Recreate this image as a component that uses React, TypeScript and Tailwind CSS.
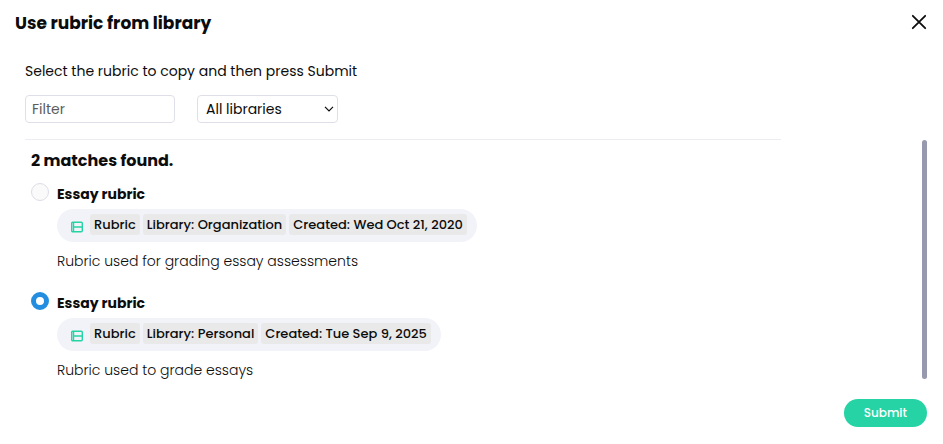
import React, { useState } from 'react';

interface Rubric {
    id: string;
    name: string;
    library: string;
    created: string;
    description: string;
}

const rubrics: Rubric[] = [
    {
        id: 'organization',
        name: 'Essay rubric',
        library: 'Organization',
        created: 'Wed Oct 21, 2020',
        description: 'Rubric used for grading essay assessments',
    },
    {
        id: 'personal',
        name: 'Essay rubric',
        library: 'Personal',
        created: 'Tue Sep 9, 2025',
        description: 'Rubric used to grade essays',
    },
];

const CloseIcon: React.FC = () => (
    <svg viewBox="0 0 16 16" className="w-4 h-4" fill="none" stroke="currentColor" strokeWidth="1.8" strokeLinecap="round">
        <path d="M1.8 1.8 14.2 14.2M14.2 1.8 1.8 14.2" />
    </svg>
);

const RubricIcon: React.FC = () => (
    <svg viewBox="0 0 12 12" className="w-3 h-3 shrink-0" fill="none" stroke="#25d3a4" strokeWidth="1.4">
        <rect x="0.7" y="1.2" width="10.6" height="9.6" rx="1" />
        <path d="M2.5 1.2v9.6M2.5 6h8.8" />
    </svg>
);

const Tag: React.FC<{ children: React.ReactNode }> = ({ children }) => (
    <span className="h-[21px] px-1 rounded-[3px] bg-[#e9e9ea] text-[13px] leading-[21px] font-medium whitespace-nowrap">{children}</span>
);

interface RubricOptionProps {
    rubric: Rubric;
    checked: boolean;
    onSelect: (id: string) => void;
}

const RubricOption: React.FC<RubricOptionProps> = ({ rubric, checked, onSelect }) => (
    <li className="flex gap-2 h-[109px]">
        <input
            type="radio"
            id={rubric.id}
            name="rubric"
            checked={checked}
            onChange={() => onSelect(rubric.id)}
            className="appearance-none shrink-0 w-[18px] h-[18px] rounded-full border border-[#dddde8] bg-[#fafafa] checked:border-[5px] checked:border-[#238ee0] checked:bg-white"
        />
        <div className="pt-px flex flex-col items-start">
            <label htmlFor={rubric.id} className="text-sm leading-5 font-bold">{rubric.name}</label>
            <div className="mt-[5px] h-[33px] pl-3.5 pr-2.5 pt-[5px] flex items-start gap-[3px] rounded-full bg-[#f2f2f9]">
                <span className="pt-[7px] pr-1"><RubricIcon /></span>
                <Tag>Rubric</Tag>
                <Tag>Library: {rubric.library}</Tag>
                <Tag>Created: {rubric.created}</Tag>
            </div>
            <p className="mt-[9px] text-sm leading-5 font-light text-[#0c0c0c]">{rubric.description}</p>
        </div>
    </li>
);

const App: React.FC = () => {
    const [filter, setFilter] = useState('');
    const [library, setLibrary] = useState('all');
    const [selectedId, setSelectedId] = useState('personal');

    return (
        <div className="bg-white text-[#0c0c0c] font-['Poppins','Inter',sans-serif]">
            <header className="flex items-start justify-between pt-[13px] pl-[15px] pr-4">
                <h1 className="text-[17px] leading-5 font-bold">Use rubric from library</h1>
                <button type="button" aria-label="Close" className="pt-px"><CloseIcon /></button>
            </header>

            <div className="pt-7 pl-[25px]">
                <p className="text-sm leading-5">Select the rubric to copy and then press Submit</p>
                <div className="mt-3.5 flex gap-[22px]">
                    <input
                        type="text"
                        aria-label="Filter"
                        placeholder="Filter"
                        value={filter}
                        onChange={(e) => setFilter(e.target.value)}
                        className="w-[150px] h-7 px-1.5 rounded-sm border border-[#dfdfe9] text-sm placeholder:text-[#5c5c5c]"
                    />
                    <div className="relative">
                        <select
                            aria-label="Library"
                            value={library}
                            onChange={(e) => setLibrary(e.target.value)}
                            className="appearance-none w-[141px] h-7 pl-2 rounded-sm border border-[#dfdfe9] bg-white text-sm"
                        >
                            <option value="all">All libraries</option>
                            <option value="organization">Organization</option>
                            <option value="personal">Personal</option>
                        </select>
                        <svg viewBox="0 0 10 6" className="absolute right-1 top-[11px] w-2.5 h-1.5 pointer-events-none" fill="none" stroke="currentColor" strokeWidth="1.2">
                            <path d="M1 0.8 5 4.8 9 0.8" />
                        </svg>
                    </div>
                </div>
            </div>

            <main className="mt-4 pl-[25px] pr-4 flex justify-between">
                <div className="grow max-w-[756px] h-[240px] overflow-hidden border-t border-[#ececf3]">
                    <div className="pl-1.5 pt-[11px]">
                        <h2 className="text-base leading-5 font-bold">{rubrics.length} matches found.</h2>
                        <ul className="pt-3">
                            {rubrics.map(r => (
                                <RubricOption key={r.id} rubric={r} checked={r.id === selectedId} onSelect={setSelectedId} />
                            ))}
                        </ul>
                    </div>
                </div>
                <div className="w-[5px] mt-px rounded-full bg-[#9799af]" />
            </main>

            <footer className="flex justify-end pt-5 pr-4 pb-4">
                <button type="submit" className="h-7 px-5 rounded-full bg-[#25d3a4] text-white text-xs font-medium">Submit</button>
            </footer>
        </div>
    );
};

export default App;
